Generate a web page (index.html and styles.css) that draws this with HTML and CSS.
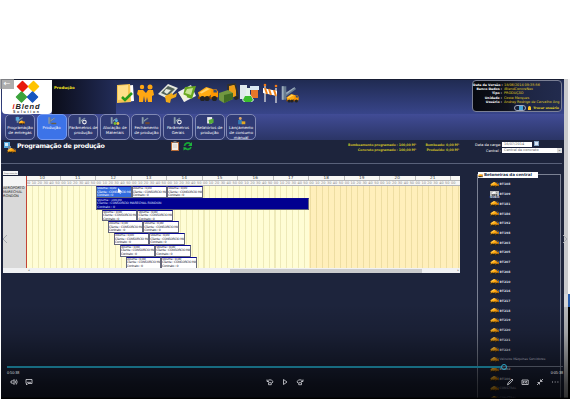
FILE: index.html
```html
<!DOCTYPE html>
<html lang="pt-BR">
<head>
<meta charset="utf-8">
<title>Programação de produção</title>
<link rel="stylesheet" href="styles.css">
</head>
<body>
<svg width="0" height="0" class="defs">
  <symbol id="truck" viewBox="0 0 24 18"><path fill="#8b4b00" d="M1 12h21v3H1z"/><path fill="#ffab12" d="M1 8l9-6 7 2 1 4-6 5H3z"/><path fill="#ff9700" d="M15 5l6-1 2 3v6h-8z"/><path fill="#334970" d="M18 5l3-.5L22 8h-4z"/><path fill="#ffd36a" d="M3 8l8-5 3 1-9 5z"/><circle cx="6" cy="14.500" r="2.800" fill="#222"/><circle cx="11" cy="14.500" r="2.800" fill="#222"/><circle cx="19" cy="14.500" r="2.800" fill="#222"/></symbol>
  <symbol id="plant" viewBox="0 0 20 18"><path fill="#66798f" d="M2 1h5v15H2zM7 8l9-6 2 2-11 8z"/><path fill="#9dadbd" d="M2 1h2v15H2zM7 8l9-6 .6 1L7 10z"/></symbol>
</svg>
<main class="app">
  <header class="top">
    <div class="logo">
      <svg viewBox="0 0 49 34">
        <g stroke-width="1.500" stroke-linejoin="round"><path fill="#e8190b" stroke="#e8190b" d="M20.500 1.500l5 5-5 5-5-5z"/><path fill="#ffc400" stroke="#ffc400" d="M31.500 1.500l5 5-5 5-5-5z"/><path fill="#3ba33b" stroke="#3ba33b" d="M19.500 12l5 5-5 5-5-5z"/><path fill="#1656bf" stroke="#1656bf" d="M30.500 12l5 5-5 5-5-5z"/></g>
        <text x="10.500" y="29" class="brand" textLength="27"><tspan fill="#d91008">i</tspan>Blend</text><text x="11" y="33" class="sub" textLength="26">Solution</text>
      </svg>
      <span class="back">←</span>
    </div>
    <div class="module">Produção</div>
    <svg class="toolbar" viewBox="0 0 190 24">
      <path fill="#fff" d="M7 3l10-1 1 16-10 1z"/><path fill="#f5c451" d="M1 2l13-1 1 18-14 1z"/><path fill="#ffdf88" d="M2 3l10-1v14l-10 1z"/><path d="M6 14l3 3 7-7" fill="none" stroke="#299a19" stroke-width="2.600"/>
      <g fill="#ffa712"><circle cx="26" cy="4" r="2.200"/><circle cx="34" cy="4" r="2.500"/><path d="M22 7h5l3 3 2-3h5l1 5-2 1v6h-4l-1-5-1 5h-1l-1-6-1 6h-4v-6l-2-2z"/></g>
      <path fill="#e5e8de" d="M52 1l10 4-10 11-10-5z"/><path fill="#53645b" d="M52 3l7 3-7 7-7-3z"/><path fill="#e6eade" d="M50 6l5 1-4 4-3-2z"/><path fill="#f2aa17" d="M49 13l7-3 1 2 4-2-1 4-5 2-1 4-4-1z"/>
      <path fill="#eee" d="M62 9l13-7 5 11-12 6z"/><path fill="#68a820" d="M69 4l11-1-4 13-9-3z"/><path fill="#c7e391" d="M71 6l6-1-2 7-6-2z"/><path fill="#f2f2dc" d="M62 9l9 4-2 6z"/>
      <use href="#truck" x="81" y="0" width="22" height="21"/>
      <path fill="#ee9e19" d="M113 3l7-2v13h-7z"/><path d="M112 12V2l7-1 3 11v4" stroke="#343124" stroke-width="1.500" fill="none"/><path fill="#719840" d="M103 10l9-3 5 3v6l-9 4-5-3z"/><path fill="#416c23" d="M108 12l9-2v6l-9 4z"/><circle cx="120" cy="15" r="2" fill="#272727"/>
      <path fill="#dfe9ec" d="M124 2h7v14h-7z"/><path fill="#e7762b" d="M135 6h7v9h-7z"/><path fill="#dbe8f3" d="M134 3h9v4h-9z"/><path fill="#e3f2ea" d="M130 5h4v6l4 6-2 2h-8l-2-2 4-6z"/><path fill="#3abb2c" d="M129 13h6l2 4-2 2h-6l-2-2z"/>
      <path d="M149 3v16M160 5v15" stroke="#ddd" stroke-width="1.300"/><path fill="#fff" d="M147 5l14 3v5l-14-3z"/><path stroke="#ef8219" stroke-width="2" d="M149 5l2 6M153 6l2 6M158 7l2 6"/><circle cx="149" cy="2" r="1.300" fill="#f57b15"/><circle cx="160" cy="3" r="1.300" fill="#f57b15"/>
      <use href="#plant" x="164" y="1" width="18" height="19"/><use href="#truck" x="169" y="10" width="15" height="10"/>
    </svg>
    <dl class="session">
      <dt>Data da Versão :</dt><dd>18/06/2014 09:35:56</dd>
      <dt>Banco Dados :</dt><dd>iBlendConcreNex</dd>
      <dt>Tipo :</dt><dd>PRODUÇÃO</dd>
      <dt>Unidade :</dt><dd>Costa Marques</dd>
      <dt>Usuário :</dt><dd>Andrey Rodrigo de Carvalho Ang</dd>
      <dd class="swap"><i class="pill"><b></b></i><i class="lock"></i><span>Trocar usuário</span></dd>
    </dl>
  </header>
  <nav class="nav" id="nav"></nav>
  <section class="heading">
    <svg class="hicon" viewBox="0 0 14 14"><path fill="#54a9db" d="M1 1h6v6H1z"/><path fill="#d7ecf8" d="M2 2h3v3H2z"/><path fill="#778ba0" d="M5 5h3v5H5z"/><use href="#truck" x="4" y="6" width="9" height="7"/></svg>
    <h1>Programação de produção</h1>
    <svg class="actions" viewBox="0 0 22 10"><path fill="#b76c38" d="M0 1h8v9H0z"/><path fill="#f4eee5" d="M1 2h6v7H1z"/><path fill="#777" d="M2.500 0h3v2h-3z"/><path d="M2 4h4M2 6h4" stroke="#bbb" stroke-width=".6"/><path d="M19.500 3A3.500 3.500 0 0 0 13.500 5M14 7A3.500 3.500 0 0 0 20 6" stroke="#16a536" stroke-width="1.800" fill="none"/><path fill="#20b33e" d="M21 1v4h-4zM12.500 9.500V6l3.500 1z"/></svg>
    <div class="totals"><p>Bombeamento programado : <em>100,00 M³</em></p><p>Concreto programado : <em>100,00 M³</em></p></div>
    <div class="totals second"><p>Bombeado: <em>0,00 M³</em></p><p>Produzido: <em>0,00 M³</em></p></div>
    <form class="filters"><label>Data da carga:</label><span class="date">16/07/2014</span><i class="cal"></i><label>Central :</label><span class="select">Central de concreto<b>⌄</b></span></form>
  </section>
  <section class="content">
    <div class="schedule">
      <div class="tab">Programação</div>
      <div class="grid">
        <div class="place"><p>AEROPORTO<br>MARECHAL<br>RONDON</p></div>
        <div class="time"><div class="hours" id="hours"></div><div class="minutes" id="minutes"></div><div class="lanes" id="lanes"></div></div>
        <div class="hscroll"><span>◂</span><i></i><span>▸</span></div>
      </div>
    </div>
    <aside class="trucks"><h2><svg><use href="#truck"/></svg>Betoneiras da central</h2><ul id="trucks"></ul></aside>
  </section>
  <div class="edge"><i class="white"></i><i class="blue"></i><i class="black"></i></div>
  <svg class="chev left" viewBox="0 0 6 10"><path d="M5 1L1 5l4 4"/></svg>
  <svg class="chev right" viewBox="0 0 6 10"><path d="M1 1l4 4-4 4"/></svg>
  <svg class="pointer" viewBox="0 0 4 6"><path d="M0 0v5l1.200-1L2 6l.8-.4L2 3.700h1.800z"/></svg>
  <div class="player">
    <div class="track"><i class="played"></i><i class="knob"></i></div>
    <div class="clock"><span>0:50:38</span><span>0:05:38</span></div>
    <div class="controls">
      <div><svg viewBox="0 0 8 8"><path d="M1 3h1.500L4 1.500v5L2.500 5H1zM5 2.500q1 1.500 0 3M6.300 1.500q1.700 2.500 0 5"/></svg><svg viewBox="0 0 8 8"><path d="M1 1.500h6v4H3L1.500 7V5.500H1zM2 4.300h4"/></svg></div>
      <div><svg viewBox="0 0 8 8"><path d="M1 1.500v2h2M1 3.500Q4 0 7 3.500L6.300 5M2.500 4.700h2.800v2H2.500z"/></svg><svg viewBox="0 0 8 8"><path d="M2.500 1.500L6 4 2.500 6.500z"/></svg><svg viewBox="0 0 8 8"><path d="M7 1.500v2H5M7 3.500Q4 0 1 3.500L1.700 5M2.700 4.700h2.800v2H2.700z"/></svg></div>
      <div><svg viewBox="0 0 8 8"><path d="M1.500 6.800l.6-2L6 1l1 1-3.800 4z"/></svg><svg viewBox="0 0 8 8"><path d="M1 2h6.200v4.500H1zM3.600 3.500H2.300V5h1.300M6 3.500H4.700V5H6"/></svg><svg viewBox="0 0 8 8"><path d="M7 1L4.500 3.500M4.500 1.500v2h2M1 7l2.500-2.500M1.500 4.500h2v2"/></svg><svg viewBox="0 0 8 8"><path d="M1 4h1M3.700 4h1M6.400 4h1"/></svg></div>
    </div>
  </div>
</main>
<script src="script.js"></script>
</body>
</html>
```
FILE: styles.css
```css
* { box-sizing: border-box; }
body { margin: 0; width: 570px; height: 400px; overflow: hidden; background: #fff; font-family: "DejaVu Sans", sans-serif; font-size: 4px; color: #fff; }
p, h1, h2, ul, dl, dd { margin: 0; padding: 0; }
i, em { font-style: normal; }
.defs { position: absolute; }
.app { position: relative; margin: 79px 6px 0 1px; height: 320px; background: #1d243c; }
.top { display: flex; height: 35px; background: linear-gradient(#202b52, #38458a); border-top: 1px solid #171d33; }
.logo { position: relative; width: 50px; height: 34px; margin-left: 1px; background: #fff; border-radius: 0 0 4px 4px; }
.logo svg { display: block; width: 49px; height: 34px; }
.brand { font: italic bold 7.500px "Liberation Sans", sans-serif; fill: #222; }
.sub { font: bold 3.500px "Liberation Sans", sans-serif; fill: #333; }
.back { position: absolute; left: -2px; top: -1px; width: 14px; height: 10px; background: #999c; font-size: 8px; line-height: 9px; text-align: center; }
.module { width: 64px; padding: 5px 0 0 2px; color: #f2e322; font-weight: bold; font-size: 3.900px; background: linear-gradient(90deg, #0b0d1a, #161c38 50%, #222c58); }
.toolbar { width: 190px; height: 24px; margin: 3px 0 0; overflow: visible; }
.session { display: grid; grid-template-columns: 29px 1fr; grid-auto-rows: 4.200px; column-gap: 2px; align-content: start; width: 90px; height: 32px; margin-left: auto; margin-right: 2px; padding-top: 2px; border: 1px solid #7b8095; border-radius: 4px; background: linear-gradient(90deg, #07090f, #10131f 40%, #1d2542 55%, #222b4e); font-weight: bold; font-size: 3.400px; line-height: 4.200px; white-space: nowrap; }
.session dt { text-align: right; font-size: 3.200px; }
.session dd { color: #e0cf22; font-weight: normal; }
.session .swap { grid-column: 1 / 3; display: flex; justify-content: flex-end; align-items: center; gap: 2px; height: 8px; padding-right: 2px; font-weight: bold; font-size: 3.200px; }
.pill { width: 12px; height: 6px; border: 1px solid #9fa8bf; border-radius: 3px; padding-left: 4px; }
.pill b { display: block; width: 4px; height: 4px; background: #4aa8da; }
.lock { width: 3px; height: 4px; background: #ffc62c; border-radius: 2px 2px 0 0; }
.nav { display: flex; gap: 1.600px; height: 26px; padding: 0 4px; background: linear-gradient(#414c96, #2b3566); }
.btn { width: 30px; height: 26px; border: 1px solid #8189b4; border-radius: 5px; background: #303b75; text-align: center; font-size: 3.900px; line-height: 4.800px; white-space: nowrap; }
.btn.active { background: #3c73e8; border-color: #7599ef; }
.btn svg { display: block; width: 10px; height: 10px; margin: 1px auto 0; }
.btn span { display: flex; flex-direction: column; align-items: center; }
.btn b { font-weight: normal; }
.heading { display: flex; height: 24px; margin-right: 2px; border-bottom: 1px solid #59617a; }
.hicon { width: 14px; height: 14px; margin: 1px 0 0 2px; }
h1 { width: 154px; font-size: 6.300px; letter-spacing: -.25px; line-height: 12px; white-space: nowrap; }
.actions { width: 22px; height: 10px; margin-top: 1px; }
.totals { width: 223px; padding-top: 3px; text-align: right; color: #c4bc29; font-size: 3.300px; letter-spacing: -.15px; font-weight: bold; line-height: 5px; white-space: nowrap; }
.totals.second { width: 43px; }
.filters { display: grid; grid-template-columns: 41px 30px 1fr; grid-template-rows: 6px 6px; column-gap: 1px; row-gap: 0; width: 102px; margin-left: auto; padding-top: 2px; font-size: 3.500px; line-height: 6px; }
.filters label { text-align: right; }
.date, .select { background: #fff; color: #666; height: 5px; line-height: 5px; padding-left: 2px; }
.select { grid-column: 2 / 4; display: flex; justify-content: space-between; }
.select b { width: 5px; background: #ddd; color: #333; text-align: center; line-height: 4px; }
.cal { width: 5px; height: 5px; margin: -1px 0 0 1px; background: #d9e5f4; border: 1px solid #86a4c4; }
.content { display: flex; height: 234px; overflow: hidden; }
.schedule { width: 458px; padding: 7px 0 0 2px; }
.tab { width: 15px; height: 4px; background: #f5f5f5; color: #555; font-size: 2px; line-height: 4px; text-align: center; }
.grid { display: grid; grid-template-columns: 24px 433px; grid-template-rows: 92px 5px; margin-top: 1px; width: 457px; background: #fff; }
.place { padding-top: 10px; border-right: 1px solid #c24435; background: linear-gradient(#f4f4f4 10px, #d9d9d9 10px); color: #222; font-size: 3.600px; letter-spacing: -.1px; line-height: 4px; }
.time { overflow: hidden; color: #444; }
.hours, .minutes { display: flex; height: 5px; line-height: 5px; background: #f7f7f5; border-bottom: 1px solid #b7b7b7; }
.hours { margin-left: -2px; font-size: 4.200px; }
.hours span { flex: 0 0 35.500px; border-right: 1px solid #bbb; text-align: center; line-height: 4px; }
.minutes { font-size: 3.500px; line-height: 4px; color: #888; margin-left: -2px; }
.minutes span { flex: 0 0 5.917px; text-align: center; }
.lanes { height: 82px; background: repeating-linear-gradient(90deg, transparent 0 4.900px, #8b791426 4.900px 5.917px), linear-gradient(90deg, #fffdd5 282px, #ffefbb 282px); }
.lane { display: flex; height: 11.800px; }
.ev { width: 35.500px; height: 11.800px; overflow: hidden; border: 1px solid #65687a; border-width: 1px .5px .5px 1px; border-top-color: #080894; background: #fff; color: #252538; font-size: 3.200px; letter-spacing: -.24px; line-height: 3.500px; white-space: nowrap; }
.ev.sel { background: #326be0; color: #fff; }
.ev.full { width: 213px; background: #000090; color: #dfe2ff; letter-spacing: -.1px; }
.hscroll { grid-column: 1 / 3; display: flex; justify-content: space-between; align-items: center; padding: 0 1px 0 25px; background: #f0f1f3; color: #777; font-size: 3px; line-height: 5px; }
.hscroll i { width: 192px; height: 4px; margin-left: 164px; background: #cacbcd; }
.trucks { position: relative; width: 84px; height: 230px; margin: 10px 0 0 18px; border: 1px solid #7b8193; border-bottom: 0; }
.trucks h2 { display: flex; align-items: center; gap: 1px; width: 60px; height: 6px; margin: -3px 0 0 0; background: #fff; color: #26324c; font-size: 4.100px; letter-spacing: -.1px; line-height: 6px; white-space: nowrap; }
.trucks h2 svg { flex: none; width: 5px; height: 5px; }
.trucks ul { list-style: none; padding: 1.500px 0 0 12px; }
.trucks li { display: flex; align-items: center; gap: .5px; height: 9.720px; font-weight: bold; font-size: 3.100px; color: #d7dae2; white-space: nowrap; }
.trucks li svg { width: 9px; height: 7px; }
.trucks li.off { position: relative; }
.trucks li.off svg { filter: grayscale(1) brightness(1.300); background: #8b9096; height: 5px; margin-bottom: 2px; }
.trucks li small { position: absolute; left: 0; top: 6.500px; font-size: 2.600px; line-height: 4px; }
.trucks li.long { font-weight: normal; }
.edge { position: absolute; left: 563px; top: 0; width: 6px; height: 320px; display: flex; flex-direction: column; }
.edge .white { height: 215px; background: linear-gradient(90deg, #c8c9cc 4px, #f7f7f7 4px); }
.edge .blue { height: 13px; background: linear-gradient(90deg, #d4d5d8 4px, #275cab 4px); }
.edge .black { flex: 1; background: linear-gradient(90deg, #b8babd 4px, #000 4px); }
.chev { position: absolute; top: 155px; width: 6px; height: 10px; fill: none; stroke: #a5a8ae; stroke-width: 1; }
.left { left: 1px; }
.right { left: 561px; }
.pointer { position: absolute; left: 117px; top: 109px; width: 4px; height: 6px; fill: #fff; }
.player { position: absolute; left: 0; top: 225px; width: 567px; height: 95px; padding: 60px 6px 0; background: linear-gradient(transparent 0, #0002 30%, #0007 65%, #000a 85%, #000b 98%, #000 99%); color: #d5d7dc; }
.track { display: flex; align-items: center; width: 556px; height: 6px; background: linear-gradient(transparent 2px, #454a56 2px 3px, transparent 3px); }
.played { width: 494px; height: 2px; margin-top: -1px; background: #176b80; }
.knob { width: 6px; height: 6px; border: 1px solid #2ca8c9; border-radius: 50%; }
.clock { display: flex; justify-content: space-between; padding-top: 1px; width: 556px; font-family: "Liberation Sans", sans-serif; font-size: 3.700px; line-height: 5px; }
.controls { display: grid; grid-template-columns: 256px 240px auto; padding: 2px 0 0 3px; width: 554px; }
.controls div { display: flex; gap: 7px; }
.controls svg { width: 8px; height: 8px; fill: none; stroke: #d5d7dc; stroke-width: .8; }
```
FILE: script.js
```js
const byId = id => document.getElementById(id);
const glyph = [
  '<use href="#plant" x="1" width="12" height="10"/><path fill="#54a9db" d="M1 1h5v5H1z"/><use href="#truck" x="5" y="5" width="9" height="7"/>',
  '<use href="#plant" x="1" width="12" height="12"/><path fill="#6b6045" d="M6 9h7v2H6z"/>',
  '<use href="#plant" width="12" height="12"/><circle cx="9" cy="8" r="2.500" fill="none" stroke="#eee" stroke-width="1.500"/>',
  '<use href="#plant" width="12" height="12"/><circle cx="9" cy="6" r="2" fill="#54b6e5"/><circle cx="7" cy="10" r="2" fill="#73ba35"/><circle cx="11" cy="10" r="2" fill="#ecc13a"/>',
  '<use href="#plant" width="12" height="12"/><path fill="#6b4635" d="M6 8h6v3H6z"/>',
  '<use href="#plant" width="12" height="12"/><circle cx="9" cy="8" r="2.500" fill="none" stroke="#eee" stroke-width="1.500"/>',
  '<path fill="#eee" d="M3 1h7v9H3z"/><path fill="#54ac38" d="M5 5l7-2v6l-6 2z"/>',
  '<circle cx="6" cy="3" r="2" fill="#dfab67"/><path fill="#327ab5" d="M3 5h5l2 6H3z"/><path fill="#e3a821" d="M8 7h5v4H8z"/>'
];
const labels = ['Programação|de entregas', 'Produção', 'Parâmetros de|produção', 'Alocação de|Materiais', 'Fechamento|de produção', 'Parâmetros|Gerais', 'Relatórios de|produção', 'Lançamento|de consumo|manual'];
byId('nav').innerHTML = labels.map((t, i) => `<div class="btn${i === 1 ? ' active' : ''}"><svg viewBox="0 0 14 13">${glyph[i]}</svg><span>${t.split('|').map(x => `<b>${x}</b>`).join('')}</span></div>`).join('');

byId('hours').innerHTML = Array.from({length: 12}, (_, i) => `<span>${i + 10}</span>`).join('');
byId('minutes').innerHTML = Array.from({length: 73}, (_, i) => `<span>${['00', '10', '20', '30', '40', '50'][i % 6]}</span>`).join('');

const ev = (cls = '', vol = '0,00', client = 'CONSORCIO MA') => `<div class="ev ${cls}">Volume : ${vol}<br>Cliente : ${client}<br>Contrato : 0</div>`;
const lanes = [ev('sel') + ev() + ev(), ev('full', '100,00', 'CONSORCIO MARECHAL RONDON')];
for (let i = 0; i < 5; i++) lanes.push(ev() + ev());
byId('lanes').innerHTML = lanes.map((html, i) => `<div class="lane" style="padding-left:${69 + Math.max(0, i - 1) * 5.917}px">${html}</div>`).join('');

const names = ['BT108', 'BT109', 'BT181', 'BT186', 'BT192', 'BT198', 'BT203', 'BT205', 'BT207', 'BT208', 'BT210', 'BT216', 'BT217', 'BT218', 'BT219', 'BT220', 'BT221', 'BT224', 'Veículos Máquinas Servidores', 'BT002', 'BT100', 'CONSTRAL', 'CONSTRAL'];
byId('trucks').innerHTML = names.map((n, i) => `<li class="${i === 1 ? 'off' : n.length > 6 ? 'long' : ''}"><svg viewBox="0 0 24 18"><use href="#truck"/></svg>${n}${i === 1 ? '<small>NÚBIO</small>' : ''}</li>`).join('');
```
